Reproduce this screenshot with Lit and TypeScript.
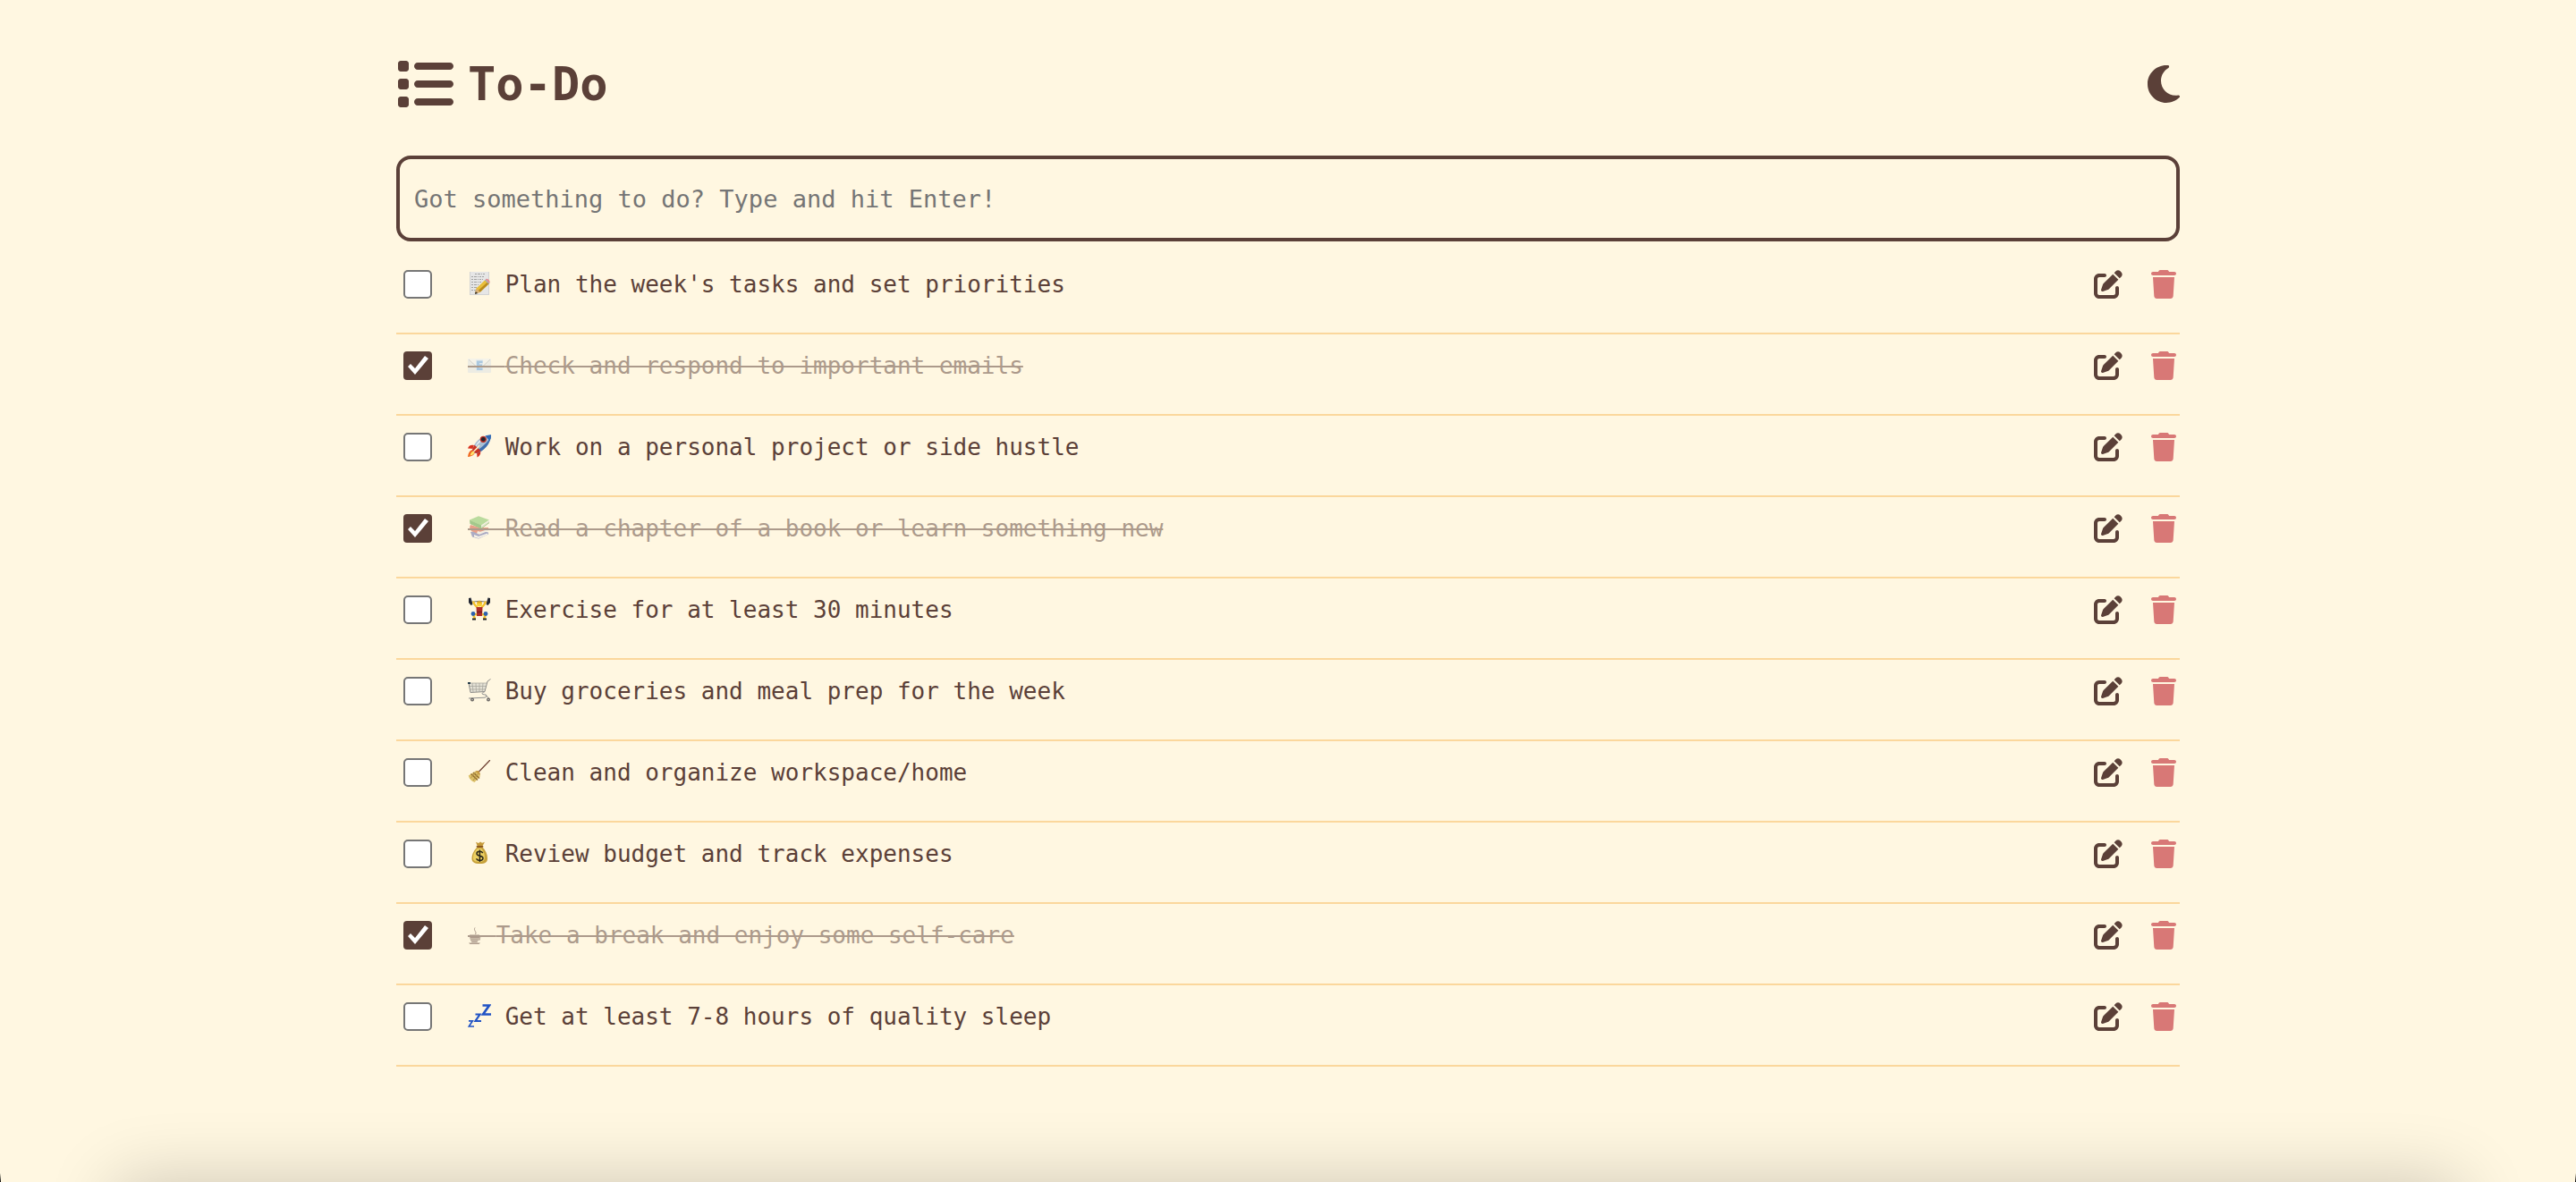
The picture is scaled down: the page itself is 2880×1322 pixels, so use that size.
import { LitElement, html, svg, css, nothing } from "lit";
import type { SVGTemplateResult } from "lit";
import { customElement, state } from "lit/decorators.js";
import { classMap } from "lit/directives/class-map.js";

interface Todo {
  id: number;
  icon: string;
  text: string;
  done: boolean;
}

/* Pictograms are drawn on a 26 x 26 grid. */
const pictograms: Record<string, SVGTemplateResult> = {
  memo: svg`
    <rect x="2" y="0" width="22" height="26" fill="#d3d3d3" />
    <rect x="3" y="0" width="20" height="25" fill="#e6e6e6" />
    <g stroke="#a2a2a2" stroke-width="1" stroke-dasharray="2 1 3 1 1 1">
      <path d="M8 2.500h11M4 5.500h14M4 8.500h13M4 11.500h11M4 14.500h9M4 17.500h6M4 20.500h5" />
    </g>
    <path d="M8 24.500l1.500-6L19.500 9l4.500 4L13.500 23z" fill="#e9bf3a" />
    <path d="M11 21.500L22.300 11.200l1.700 1.800L13.500 23z" fill="#b98a1e" />
    <path d="M8 24.800l1.500-6 4.500 4z" fill="#d9b077" />
    <path d="M8 24.900l.7-3 2.500 2z" fill="#33302c" />
    <path d="M19 9.400l1.300-1.200 4 4-1.300 1.200z" fill="#a9adb6" />
    <path d="M19.800 8.200c1.800-1.900 6 1.800 4.500 4.500z" fill="#e58a90" />`,
  email: svg`
    <rect x="0" y="6" width="26" height="16" rx="1" fill="#dde2e6" />
    <path d="M0 7l10.500 8h5L26 7V6H0z" fill="#edf0f2" />
    <path d="M1 7l8 7.500M25 7l-8 7.500" fill="none" stroke="#a8afb8" stroke-width="1" />
    <rect x="9" y="7.500" width="8" height="12" fill="#c3dcf5" />
    <path d="M10 8.500h6.500V11H13v1.500h3V15h-3v1.500h3.500V19H10z" fill="#5a9ade" />`,
  rocket: svg`
    <path d="M7 12C3 11 1 13 0 15.500l6 .5zM14 18c1 3-.5 6-3.500 7.500L10 19z" fill="#d8321f" />
    <path d="M5 17c-3 1-4.500 4-5 8 3.500-.5 7-1.500 8-5z" fill="#f0661c" />
    <path d="M6 18.500c-2 .8-3 2.800-3.500 5 2.300-.4 4.300-1 5-3.500z" fill="#ffe36b" />
    <path d="M5 17.500C7 9 14 1.500 26 .3 25.500 11 18 19 9 21z" fill="#a9bfd3" />
    <path d="M9 21C18 19 25.500 11 26 .3c-1 5-8 14-19 19z" fill="#3f6fae" />
    <path d="M7.500 15C10 9 15 4 22 2 16 6 11 10 7.500 15z" fill="#f1f6fa" />
    <path d="M19.500 1.600C21.500.8 24 .4 26 .3c0 2.500-.6 5-1.400 7z" fill="#2f68b4" />
    <path d="M5 17.500c.5-2 1.300-4 2.600-5.800l7 6.500C13 19.600 11 20.500 9 21z" fill="#c93324" />
    <path d="M6.500 19C9 17 11 15 13 12" stroke="#fff2c8" stroke-width="1.500" fill="none" />
    <circle cx="17.300" cy="5.300" r="3.600" fill="#b92f25" />
    <circle cx="17.300" cy="5.300" r="2.300" fill="#20242c" />`,
  books: svg`
    <path d="M3 18l10-2 10 2.500v2l-11 5-7-2z" fill="#5b63a8" />
    <path d="M7 21l5 2 10-3.500V21l-10 4-5-1.500z" fill="#f3f2ee" />
    <path d="M2 13l1-3 10 3 10 0v3l-10 4.500L4 17z" fill="#d34b33" />
    <path d="M11 17l3 .8 9-3v2l-10 4-3-1.300z" fill="#e9e6e4" />
    <path d="M2 4.500L12 .3l12 4.200-9 6.500z" fill="#78c05c" />
    <path d="M2 4.500l13 6v4L2.500 9z" fill="#4a9a37" />
    <path d="M15 10.500l9-6v3l-9 6.500z" fill="#e9efe2" />
    <path d="M15 12.300l9-6" stroke="#b3bda9" stroke-width=".7" />
    <path d="M15 14l9-6.500" stroke="#4a9a37" stroke-width="1" />`,
  lifter: svg`
    <path d="M3 5.500Q13 3 23 5.500" stroke="#777" stroke-width="1" fill="none" />
    <path d="M1 1l2.500-.5 2 7.500L3.500 9 1 6zM25 1l-2.500-.5-2 7.500 2 1L25 6z" fill="#232733" />
    <path d="M6 4.500c1 3.500 2.500 5.500 5 6.500M20 4.500c-1 3.500-2.500 5.500-5 6.500" stroke="#f3c02b" stroke-width="2.500" fill="none" />
    <circle cx="13" cy="7.500" r="3" fill="#f8cf35" />
    <path d="M10 6.500c.5-3 5.500-3 6 0z" fill="#e0a51c" />
    <path d="M9.500 11h7l-.5 10h-6z" fill="#ad2c2b" />
    <path d="M10 15.500h6v2h-6z" fill="#812022" />
    <path d="M10 19l-4 .5 2 4.500M16 19l4 .5-2 4.500" stroke="#f3c02b" stroke-width="2.500" fill="none" />
    <circle cx="6" cy="18.500" r="2.400" fill="#2d62ae" />
    <circle cx="20" cy="18.500" r="2.400" fill="#2d62ae" />
    <path d="M5 23.500h4v2H5zM17 23.500h4v2h-4z" fill="#222" />`,
  cart: svg`
    <path d="M1 5h20l-2 9.500-16 1z" fill="#e4e1d5" />
    <path d="M1 5l2 10.500 16-1L22 3l3.500-2.500" fill="none" stroke="#8c8b88" stroke-width="1" />
    <path d="M1 5h20M2 8.500h18M2.500 12h17M5 5l1 10M9 5l.5 10M13 5v10M17 5l-.8 9.500" stroke="#a9a89f" stroke-width=".8" fill="none" />
    <path d="M19 14.500c-4 2-4.500 3 1 3.500 1.500.3 1 3-1 3.200L1 22" fill="none" stroke="#8f8f8f" stroke-width="1" />
    <path d="M20 18.500l4 4" stroke="#858585" stroke-width="1" />
    <rect x="0" y="4" width="3" height="2" fill="#243b48" />
    <circle cx="5" cy="23.500" r="2" fill="#66625f" />
    <circle cx="23" cy="23.500" r="2" fill="#66625f" />
    <circle cx="5" cy="23.500" r=".8" fill="#c9c6c2" />
    <circle cx="23" cy="23.500" r=".8" fill="#c9c6c2" />`,
  broom: svg`
    <path d="M24.500.5L12.500 13" stroke="#6e4032" stroke-width="1.200" stroke-linecap="round" />
    <path d="M8 13.500c1.500-2 4-1.800 5 0s1.500 3-.5 4.500z" fill="#c79b43" />
    <path d="M8.500 12.500L.7 17.500c1 3.500 3 6 6.800 7.500L14 18z" fill="#dcc068" />
    <path d="M3.500 15.500l7.500 7M6 14l7 6.500" stroke="#8f6a2d" stroke-width="1.300" />
    <path d="M9 14l-6 6.500M11 15.500l-5 7.500" stroke="#b3934a" stroke-width="1" />`,
  money: svg`
    <path d="M9 .8l3 1.200L14 .5l2 1.300L19 .8 16 6h-5z" fill="#c59a3a" />
    <path d="M11 6h5c4 4 6 8 6 13 0 4-2 6-8.500 6S4.500 23 4.500 19c0-5 2.500-9 6.500-13z" fill="#c7a13a" />
    <path d="M11 8c-4 3.500-5 7-5 11 0 3 3 4 7 4s6-2 6-5-1-7-4-10z" fill="#ebcf62" />
    <path d="M10.500 5.800h6" stroke="#87521d" stroke-width="1.800" stroke-linecap="round" />
    <path d="M16.800 13c-.8-1.300-2-1.700-3.500-1.700-2 0-3.300 1-3.300 2.500 0 3.400 7 1.700 7 5 0 1.600-1.500 2.600-3.700 2.600-1.700 0-3-.6-3.800-2M13.400 9.600v13.500" fill="none" stroke="#2a2618" stroke-width="1.500" />`,
  sleep: svg`
    <g fill="none" stroke="#2254c5" stroke-linejoin="miter">
      <path d="M16.500 1.500h7.500L17 11.500h9" stroke-width="2.600" />
      <path d="M8.500 11.500h5l-5 7.500h6.500" stroke-width="2.200" />
      <path d="M1 18.800h4.300L1.300 25H7" stroke-width="1.700" />
    </g>`,
  coffee: svg`
    <path d="M2 13.500h11v1.500h1.500l-.8 4.500h-2L10.500 22h-6C3 20 2 17 2 13.500zm11 3l-.4 2h.5l.5-2z" fill="#5d4037" />
    <path d="M1 22.500h13l-1.500 1.500h-10z" fill="#5d4037" />
    <path d="M2.500 15.500h10M3 18h9.500M3.500 20.300h8" stroke="#fff8e1" stroke-width=".6" />
    <path d="M8.500 13c2-3-2.500-4-.5-7.500" fill="none" stroke="#5d4037" stroke-width="1" />`,
};

const glyph = (box: string, d: string, name: string) => html`
  <svg class=${name} viewBox=${box} fill="currentColor" aria-hidden="true"><path d=${d} /></svg>
`;

const listIcon = () =>
  glyph(
    "0 0 512 512",
    "M40 48C26.7 48 16 58.7 16 72v48c0 13.3 10.7 24 24 24H88c13.3 0 24-10.7 24-24V72c0-13.3-10.7-24-24-24H40zM192 64c-17.7 0-32 14.3-32 32s14.3 32 32 32H480c17.7 0 32-14.3 32-32s-14.3-32-32-32H192zm0 160c-17.7 0-32 14.3-32 32s14.3 32 32 32H480c17.7 0 32-14.3 32-32s-14.3-32-32-32H192zm0 160c-17.7 0-32 14.3-32 32s14.3 32 32 32H480c17.7 0 32-14.3 32-32s-14.3-32-32-32H192zM16 232v48c0 13.3 10.7 24 24 24H88c13.3 0 24-10.7 24-24V232c0-13.3-10.7-24-24-24H40c-13.3 0-24 10.700-24 24zM40 368c-13.300 0-24 10.700-24 24v48c0 13.300 10.700 24 24 24H88c13.300 0 24-10.700 24-24V392c0-13.300-10.700-24-24-24H40z",
    "list-icon",
  );

const moonIcon = () =>
  glyph(
    "0 0 384 512",
    "M223.5 32C100 32 0 132.3 0 256S100 480 223.5 480c60.6 0 115.5-24.2 155.8-63.4c5-4.9 6.3-12.5 3.1-18.7s-10.1-9.7-17-8.5c-9.8 1.7-19.8 2.6-30.1 2.6c-96.9 0-175.5-78.8-175.5-176c0-65.8 36-123.1 89.3-153.3c6.1-3.5 9.2-10.5 7.7-17.3s-7.3-11.9-14.3-12.5c-6.3-.5-12.6-.8-19-.8z",
    "moon-icon",
  );

const editIcon = () =>
  glyph(
    "0 0 512 512",
    "M471.6 21.7c-21.9-21.9-57.3-21.9-79.2 0L362.3 51.7l97.9 97.9 30.1-30.1c21.9-21.9 21.9-57.3 0-79.2L471.6 21.7zm-299.2 220c-6.1 6.1-10.8 13.6-13.5 21.9l-29.6 88.8c-2.9 8.6-.6 18.1 5.8 24.6s15.9 8.7 24.6 5.8l88.8-29.6c8.2-2.7 15.7-7.4 21.9-13.5L437.7 172.3 339.7 74.3 172.4 241.7zM96 64C43 64 0 107 0 160V416c0 53 43 96 96 96H352c53 0 96-43 96-96V320c0-17.700-14.300-32-32-32s-32 14.300-32 32v96c0 17.700-14.300 32-32 32H96c-17.700 0-32-14.300-32-32V160c0-17.700 14.300-32 32-32h96c17.700 0 32-14.300 32-32s-14.300-32-32-32H96z",
    "edit-icon",
  );

const trashIcon = () =>
  glyph(
    "0 0 448 512",
    "M135.2 17.7L128 32H32C14.3 32 0 46.3 0 64S14.3 96 32 96H416c17.7 0 32-14.3 32-32s-14.3-32-32-32H320l-7.2-14.3C307.4 6.8 296.3 0 284.2 0H163.8c-12.1 0-23.2 6.8-28.6 17.7zM416 128H32L53.2 467c1.6 25.3 22.6 45 47.9 45H346.9c25.3 0 46.3-19.7 47.9-45L416 128z",
    "trash-icon",
  );

@customElement("app-root")
export class AppRoot extends LitElement {
  @state() private todos: Todo[] = [
    { id: 1, icon: "memo", text: "Plan the week's tasks and set priorities", done: false },
    { id: 2, icon: "email", text: "Check and respond to important emails", done: true },
    { id: 3, icon: "rocket", text: "Work on a personal project or side hustle", done: false },
    { id: 4, icon: "books", text: "Read a chapter of a book or learn something new", done: true },
    { id: 5, icon: "lifter", text: "Exercise for at least 30 minutes", done: false },
    { id: 6, icon: "cart", text: "Buy groceries and meal prep for the week", done: false },
    { id: 7, icon: "broom", text: "Clean and organize workspace/home", done: false },
    { id: 8, icon: "money", text: "Review budget and track expenses", done: false },
    { id: 9, icon: "coffee", text: "Take a break and enjoy some self-care", done: true },
    { id: 10, icon: "sleep", text: "Get at least 7-8 hours of quality sleep", done: false },
  ];

  static styles = css`
    :host {
      --ink: #5b4038;
      --paper: #fff7e1;
      --rule: #fbd79c;
      --danger: #d87876;
      position: relative;
      display: block;
      box-sizing: border-box;
      min-height: 100vh;
      padding: 62px 32px;
      overflow: hidden;
      background: var(--paper);
      color: var(--ink);
      font-family: "DejaVu Sans Mono", "Liberation Mono", monospace;
      font-size: 26px;
    }
    .page {
      max-width: 1994px;
      margin: 0 auto;
    }
    header {
      display: flex;
      align-items: center;
      justify-content: space-between;
      height: 64px;
      margin-bottom: 48px;
    }
    h1 {
      display: flex;
      align-items: center;
      gap: 16px;
      margin: 0;
      font-size: 52px;
      line-height: 64px;
    }
    svg {
      display: block;
    }
    .list-icon {
      width: 64px;
      height: 64px;
    }
    .moon-icon {
      width: 36px;
      height: 48px;
    }
    .edit-icon {
      width: 32px;
      height: 32px;
    }
    .trash-icon {
      width: 28px;
      height: 32px;
    }
    button {
      display: block;
      padding: 0;
      border: 0;
      background: none;
      color: inherit;
      cursor: pointer;
    }
    .remove {
      color: var(--danger);
    }
    .entry {
      display: block;
      box-sizing: border-box;
      width: 100%;
      height: 96px;
      margin: 0 0 13px;
      padding: 0 16px;
      border: 4px solid var(--ink);
      border-radius: 16px;
      outline: 0;
      background: transparent;
      color: var(--ink);
      font-family: inherit;
      font-size: 27px;
    }
    .entry::placeholder {
      color: #757575;
      opacity: 1;
    }
    ul {
      margin: 0;
      padding: 0;
      list-style: none;
    }
    li {
      display: flex;
      align-items: center;
      padding: 19px 4px 38px 8px;
      border-bottom: 2px solid var(--rule);
    }
    .check {
      flex: none;
      box-sizing: border-box;
      width: 32px;
      height: 32px;
      margin: 0 40px 0 0;
      border: 2px solid #767676;
      border-radius: 5px;
      appearance: none;
      background: #fff;
    }
    .check:checked {
      border: 0;
      border-radius: 4px;
      background: var(--ink);
    }
    .check:checked::before {
      content: "";
      display: block;
      width: 32px;
      height: 32px;
      background: #fff;
      clip-path: polygon(5px 17px, 8px 14px, 13px 19px, 24px 5px, 28px 8px, 13px 26px);
    }
    .label {
      flex: 1;
      line-height: 32px;
    }
    .done {
      opacity: 0.5;
      text-decoration: line-through 2px;
    }
    .emoji {
      position: relative;
      display: inline-block;
      width: 26px;
      height: 26px;
      vertical-align: -3px;
    }
    .narrow {
      width: 16px;
    }
    .emoji svg {
      width: 26px;
      height: 26px;
    }
    .done .emoji::after {
      content: "";
      position: absolute;
      left: 0;
      right: 0;
      top: 14px;
      height: 2px;
      background: var(--ink);
    }
    .actions {
      display: flex;
      gap: 32px;
    }
    .dock-shadow {
      position: absolute;
      top: 100%;
      left: 130px;
      right: 130px;
      height: 160px;
      box-shadow: 0 0 80px rgba(0, 0, 0, 0.2);
      pointer-events: none;
    }
    .corner {
      position: absolute;
      bottom: 0;
      width: 1px;
      height: 10px;
      background: linear-gradient(transparent, #000);
    }
    .corner.start {
      left: 0;
    }
    .corner.end {
      right: 0;
    }
  `;

  private add(event: KeyboardEvent) {
    const field = event.target as HTMLInputElement;
    const text = field.value.trim();
    if (event.key !== "Enter" || !text) return;
    this.todos = [...this.todos, { id: Date.now(), icon: "", text, done: false }];
    field.value = "";
  }

  private toggle(id: number) {
    this.todos = this.todos.map((t) => (t.id === id ? { ...t, done: !t.done } : t));
  }

  private remove(id: number) {
    this.todos = this.todos.filter((t) => t.id !== id);
  }

  private row(todo: Todo) {
    const box = `todo-${todo.id}`;
    return html`
      <li>
        <input
          class="check"
          type="checkbox"
          id=${box}
          .checked=${todo.done}
          @change=${() => this.toggle(todo.id)}
        />
        <label class=${classMap({ label: true, done: todo.done })} for=${box}
          >${todo.icon
            ? html`<span class=${classMap({ emoji: true, narrow: todo.icon === "coffee" })}
                ><svg viewBox="0 0 26 26" aria-hidden="true">${pictograms[todo.icon]}</svg></span
              >`
            : nothing}
          ${todo.text}</label
        >
        <div class="actions">
          <button type="button" aria-label="Edit">${editIcon()}</button>
          <button class="remove" type="button" aria-label="Delete" @click=${() => this.remove(todo.id)}>
            ${trashIcon()}
          </button>
        </div>
      </li>
    `;
  }

  render() {
    return html`
      <main class="page">
        <header>
          <h1>${listIcon()}<span>To-Do</span></h1>
          <button type="button" aria-label="Dark mode">${moonIcon()}</button>
        </header>
        <input
          class="entry"
          type="text"
          aria-label="New task"
          placeholder="Got something to do? Type and hit Enter!"
          @keydown=${this.add}
        />
        <ul>
          ${this.todos.map((t) => this.row(t))}
        </ul>
      </main>
      <div class="dock-shadow"></div>
      <span class="corner start"></span>
      <span class="corner end"></span>
    `;
  }
}
